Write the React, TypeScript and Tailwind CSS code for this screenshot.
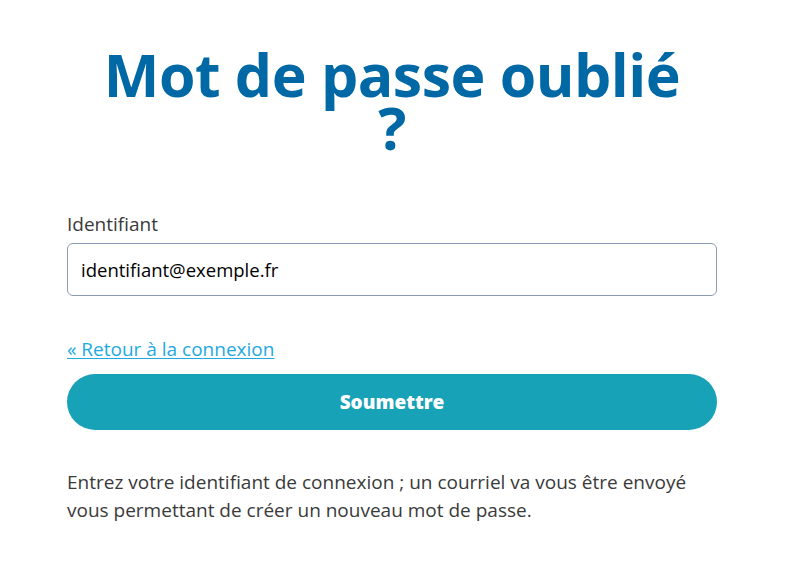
export default function App() {
  return (
    <div
      className="min-h-screen bg-white"
      style={{ fontFamily: '"Open Sans", "Noto Sans", sans-serif' }}
    >
      <div className="w-[650px] ml-[67px] pt-[48px]">
        {/* Title */}
        <h1 className="text-center text-[59px] leading-[53px] font-bold text-[#0068a5] tracking-[-0.5px]">
          Mot de passe oublié
          <br />?
        </h1>

        {/* Form */}
        <div className="mt-[57px] flex flex-col">
          <label className="text-[19px] leading-[26px] text-[#3a3a3a]">Identifiant</label>
          <input
            type="text"
            defaultValue="identifiant@exemple.fr"
            className="mt-[6px] h-[53px] w-full rounded-[6px] border border-[#8b9bb3] px-[13px] text-[18.5px] text-black outline-none"
          />

          <a
            href="#"
            className="mt-[40px] self-start text-[19px] leading-[26px] text-[#1ea9e1] underline underline-offset-2"
          >
            « Retour à la connexion
          </a>

          <button className="mt-[12px] h-[56px] w-full rounded-full bg-[#18a2b8] text-[19px] font-black text-white">
            Soumettre
          </button>

          <p className="mt-[38px] text-[19px] leading-[28px] text-[#3a3a3a]">
            Entrez votre identifiant de connexion ; un courriel va vous être envoyé vous permettant de créer un
            nouveau mot de passe.
          </p>
        </div>
      </div>
    </div>
  );
}
